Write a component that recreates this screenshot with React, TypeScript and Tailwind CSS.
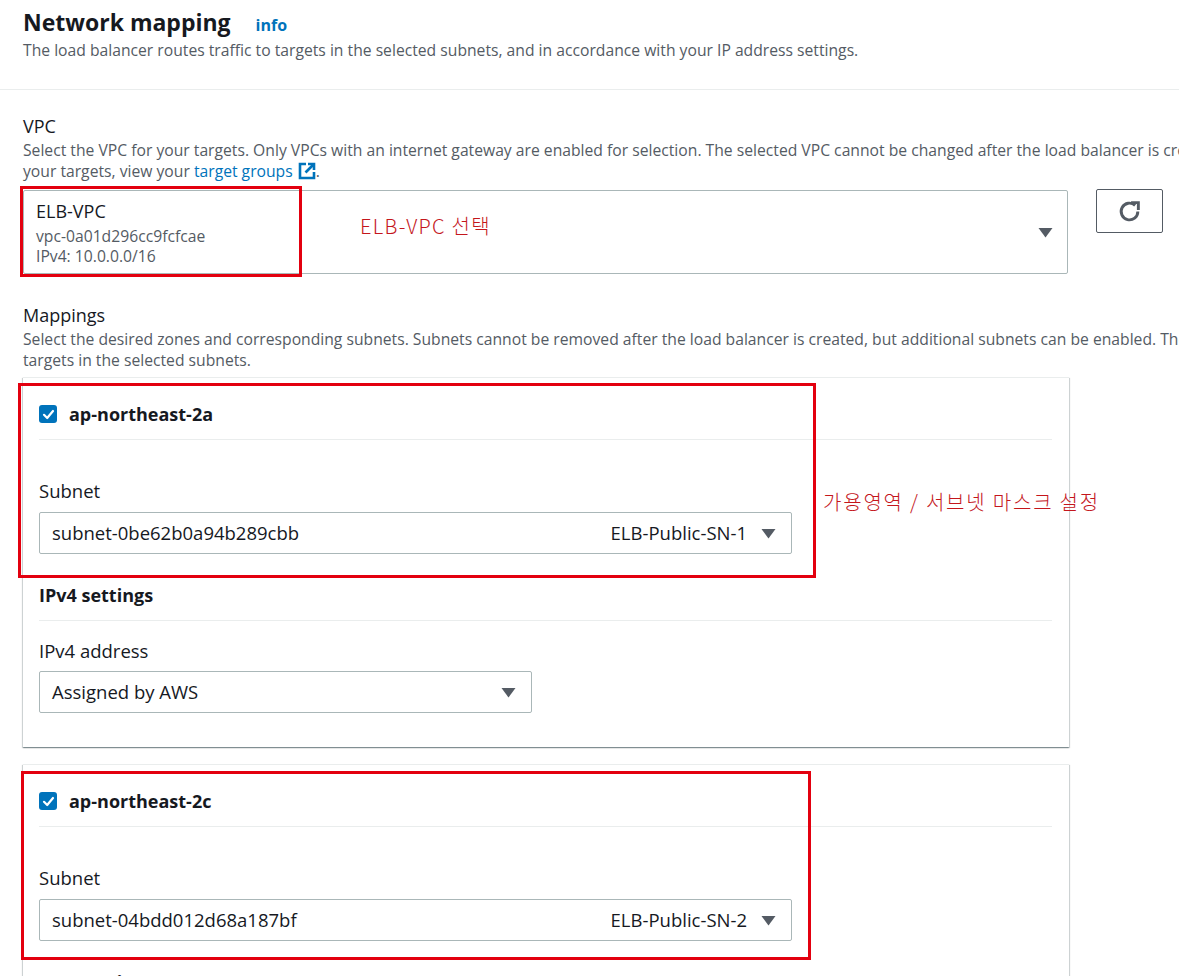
import React from "react";

const Caret = () => (
  <svg width="15" height="11" viewBox="0 0 15 11" className="shrink-0">
    <path d="M0.5 1 L14.5 1 L7.5 10.5 Z" fill="#545b64" />
  </svg>
);

const Check = () => (
  <div className="w-[18px] h-[18px] rounded-[3px] bg-[#0073bb] flex items-center justify-center shrink-0">
    <svg width="13" height="13" viewBox="0 0 13 13">
      <path d="M2 6.8 L5.2 10 L11 3" fill="none" stroke="#fff" strokeWidth="2.2" strokeLinecap="round" strokeLinejoin="round" />
    </svg>
  </div>
);

const ExtIcon = () => (
  <svg width="18" height="18" viewBox="0 0 18 18" className="inline-block align-[-3px] ml-[5px]">
    <path d="M8 2 H2 V16 H16 V10" fill="none" stroke="#0073bb" strokeWidth="2.6" />
    <path d="M10 2 H16 V8" fill="none" stroke="#0073bb" strokeWidth="2.6" />
    <path d="M16 2 L7.5 10.5" fill="none" stroke="#0073bb" strokeWidth="2.6" />
  </svg>
);

const Refresh = () => (
  <svg width="25" height="25" viewBox="0 0 24 24">
    <path d="M20 12a8 8 0 1 1-2.6-5.9" fill="none" stroke="#545b64" strokeWidth="2.8" strokeLinecap="butt" />
    <path d="M13.5 3.5 H20.5 V10.5" fill="none" stroke="#545b64" strokeWidth="2.8" />
  </svg>
);

function SubnetCard({ zone, subnet, name }: { zone: string; subnet: string; name: string }) {
  return (
    <div className="w-[1046px] bg-white border-t border-[#eaeded] shadow-[0_1px_1px_0_rgba(0,28,36,0.3),1px_1px_1px_0_rgba(0,28,36,0.15),-1px_1px_1px_0_rgba(0,28,36,0.15)] pl-4 pr-[17px] pt-[25px] pb-[34px]">
      <div className="flex items-center gap-[12px] h-[22px]">
        <Check />
        <span className="text-[18px] font-bold text-[#16191f] leading-[22px]">{zone}</span>
      </div>
      <div className="mt-[14px] h-px bg-[#eaeded]" />
      <div className="mt-[40px] text-[18.5px] leading-[22px] text-[#16191f]">Subnet</div>
      <div className="mt-[10px] w-[753px] h-[42px] border border-[#aab7b8] rounded-[2px] flex items-center pl-[12px] pr-[15px]">
        <span className="flex-1 text-[18.5px] text-[#16191f]">{subnet}</span>
        <span className="text-[18.5px] text-[#16191f] mr-[14px]">{name}</span>
        <Caret />
      </div>
      <div className="mt-[30px] text-[18px] font-bold leading-[22px] text-[#16191f]">IPv4 settings</div>
      <div className="mt-[14px] h-px bg-[#eaeded]" />
      <div className="mt-[19px] text-[18.5px] leading-[22px] text-[#16191f]">IPv4 address</div>
      <div className="mt-[9px] w-[493px] h-[42px] border border-[#aab7b8] rounded-[2px] flex items-center pl-[12px] pr-[15px]">
        <span className="flex-1 text-[18.5px] text-[#16191f]">Assigned by AWS</span>
        <Caret />
      </div>
    </div>
  );
}

export default function App() {
  return (
    <div
      className="relative w-[1179px] h-[976px] overflow-hidden bg-white text-[#16191f]"
      style={{ fontFamily: '"Open Sans", "Noto Sans", "Noto Sans CJK KR", sans-serif' }}
    >
      <div className="pl-[23px] pt-[7px]">
        <div className="flex items-baseline">
          <h1 className="text-[23px] leading-[30px] font-bold text-[#16191f]">Network mapping</h1>
          <span className="ml-[25px] text-[16px] font-bold text-[#0073bb]">info</span>
        </div>
        <p className="mt-[3px] text-[15.7px] leading-[20px] text-[#545b64] whitespace-nowrap">
          The load balancer routes traffic to targets in the selected subnets, and in accordance with your IP address settings.
        </p>
      </div>
      <div className="mt-[29px] h-px bg-[#eaeded]" />

      <div className="pl-[23px]">
        <div className="mt-[25px] text-[18px] leading-[22px]">VPC</div>
        <div className="mt-[3px] text-[15.7px] leading-[21px] text-[#545b64] whitespace-nowrap">
          <div>
            Select the VPC for your targets. Only VPCs with an internet gateway are enabled for selection. The selected VPC cannot be changed after the load balancer is created. To view
          </div>
          <div>
            your targets, view your <span className="text-[#0073bb]">target groups</span>
            <ExtIcon />.
          </div>
        </div>

        <div className="mt-[8px] flex items-start">
          <div className="w-[1045px] h-[84px] border border-[#aab7b8] rounded-[2px] flex items-center pl-[12px] pr-[14px]">
            <div className="flex-1 pt-[1px]">
              <div className="text-[18px] leading-[22px]">ELB-VPC</div>
              <div className="mt-[4px] text-[15.7px] leading-[20px] text-[#545b64]">vpc-0a01d296cc9fcfcae</div>
              <div className="text-[15.7px] leading-[20px] text-[#545b64]">IPv4: 10.0.0.0/16</div>
            </div>
            <Caret />
          </div>
          <div className="ml-[28px] -mt-px w-[67px] h-[44px] border border-[#545b64] rounded-[2px] flex items-center justify-center">
            <Refresh />
          </div>
        </div>

        <div className="mt-[30px] text-[18px] leading-[22px]">Mappings</div>
        <div className="mt-[3px] text-[15.7px] leading-[21px] text-[#545b64] whitespace-nowrap">
          <div>
            Select the desired zones and corresponding subnets. Subnets cannot be removed after the load balancer is created, but additional subnets can be enabled. The load balancer routes traffic to
          </div>
          <div>targets in the selected subnets.</div>
        </div>

        <div className="mt-[6px] flex flex-col gap-[17px]">
          <SubnetCard zone="ap-northeast-2a" subnet="subnet-0be62b0a94b289cbb" name="ELB-Public-SN-1" />
          <SubnetCard zone="ap-northeast-2c" subnet="subnet-04bdd012d68a187bf" name="ELB-Public-SN-2" />
        </div>
      </div>

      {/* annotations */}
      <div className="absolute left-[20px] top-[186px] w-[282px] h-[91px] border-[3px] border-[#e3000f]" />
      <div className="absolute left-[18px] top-[383px] w-[798px] h-[195px] border-[3px] border-[#e3000f]" />
      <div className="absolute left-[21px] top-[771px] w-[790px] h-[189px] border-[3px] border-[#e3000f]" />
      <div
        className="absolute left-[360px] top-[212px] text-[20px] leading-[28px] tracking-[1.3px] text-[#c4161c] font-light whitespace-nowrap"
        style={{ fontFamily: '"Noto Sans CJK KR", sans-serif' }}
      >
        ELB-VPC 선택
      </div>
      <div
        className="absolute left-[823px] top-[488px] text-[20px] leading-[28px] tracking-[1.8px] text-[#c4161c] font-light whitespace-nowrap"
        style={{ fontFamily: '"Noto Sans CJK KR", sans-serif' }}
      >
        가용영역 / 서브넷 마스크 설정
      </div>
    </div>
  );
}
